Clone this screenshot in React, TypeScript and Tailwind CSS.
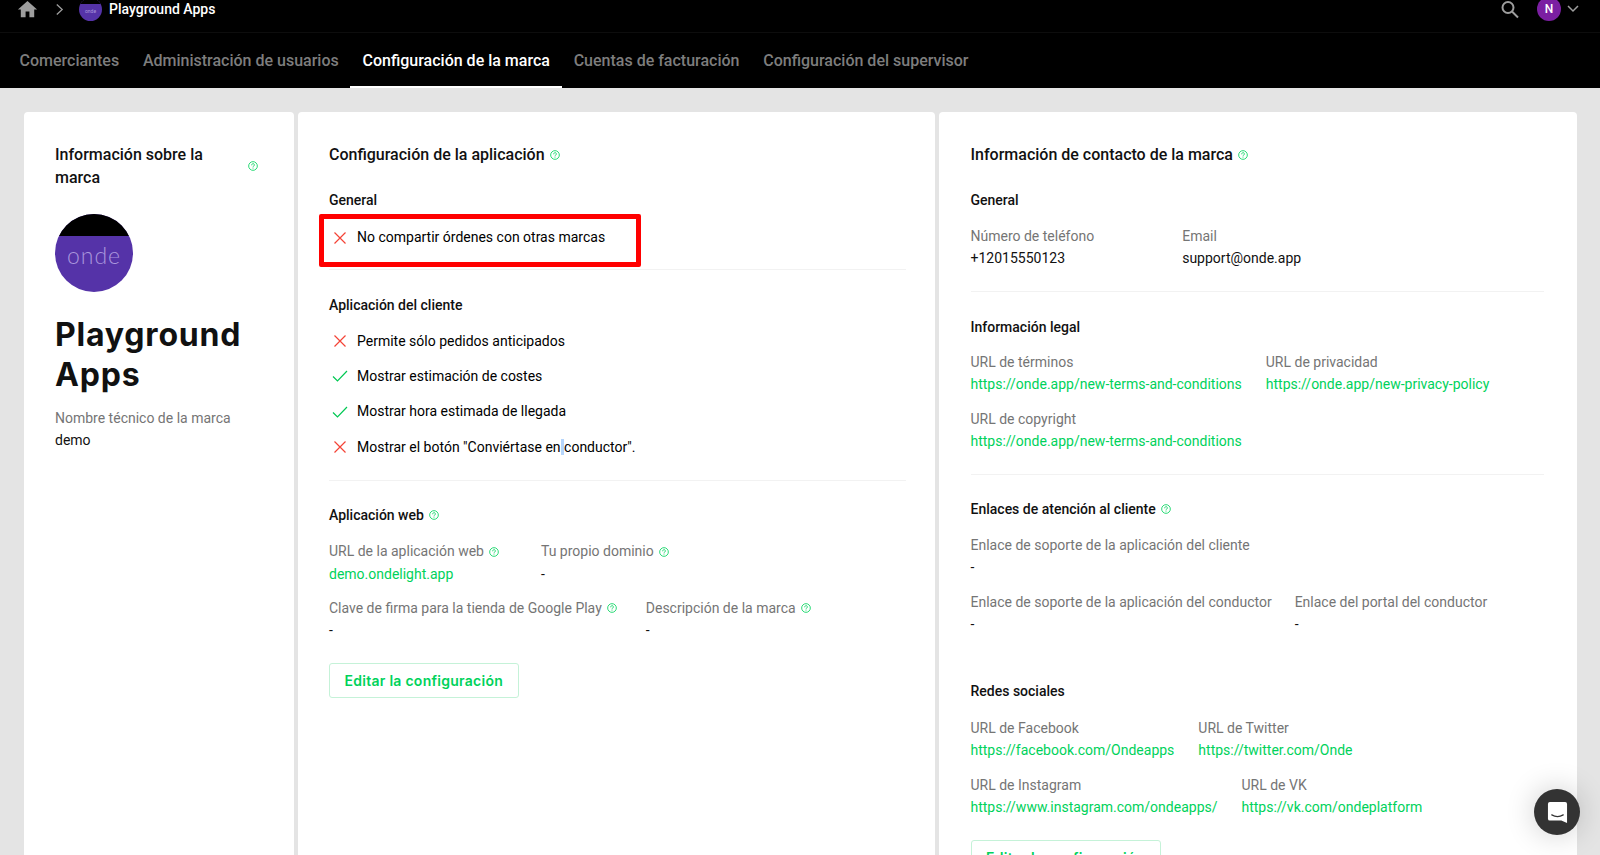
import React from "react";

const Help = ({ className = "" }: { className?: string }) => (
  <svg viewBox="0 0 12 12" className={`w-[10px] h-[10px] shrink-0 ${className}`} fill="none" stroke="#00d25b" strokeWidth="1">
    <circle cx="6" cy="6" r="5.2" />
    <path d="M4.4 4.7a1.6 1.6 0 1 1 2.5 1.3c-.6.4-.9.7-.9 1.3" strokeLinecap="round" />
    <circle cx="6" cy="9" r=".5" fill="#00d25b" stroke="none" />
  </svg>
);

const Cross = () => (
  <svg viewBox="0 0 14 14" className="w-[14px] h-[14px] shrink-0" fill="none" stroke="#f44336" strokeWidth="1.2">
    <path d="M1.5 1.5l11 11M12.5 1.5l-11 11" />
  </svg>
);
const Tick = () => (
  <svg viewBox="0 0 16 12" className="w-[16px] h-[12px] shrink-0 -ml-[1px]" fill="none" stroke="#00c853" strokeWidth="1.2">
    <path d="M1 6.5l4.5 4.5L15 1" />
  </svg>
);

const Row = ({ ok, children }: { ok?: boolean; children: React.ReactNode }) => (
  <div className="flex items-center h-[35.4px] text-[#000]">
    <span className="w-[28px] pl-[3.500px] flex items-center">{ok ? <Tick /> : <Cross />}</span>
    <span>{children}</span>
  </div>
);

const Heading = ({ children, help }: { children: React.ReactNode; help?: boolean }) => (
  <div className="flex items-center gap-[5px] h-[22px] font-medium text-[14px] text-[#111]">
    {children}
    {help && <Help />}
  </div>
);

const Field = ({ label, value, link, help, className = "" }: { label: string; value: string; link?: boolean; help?: boolean; className?: string }) => (
  <div className={`whitespace-nowrap ${className}`}>
    <div className="flex items-center gap-[5px] h-[22px] text-[#757575]">
      {label}
      {help && <Help />}
    </div>
    <div className={`h-[22px] leading-[22px] -mb-[0.500px] ${link ? "text-[#00d25b]" : "text-[#111]"}`}>{value}</div>
  </div>
);

const Divider = () => <div className="h-px bg-[#f2f2f2]" />;

const EditButton = () => (
  <button className="h-[35px] pl-[14.500px] pr-[15px] rounded-[3px] border border-[#c5f2d8] text-[#00d25b] text-[14px] font-semibold tracking-[0.27px] whitespace-nowrap bg-white" style={{ fontFamily: "Inter, sans-serif" }}>
    Editar la configuración
  </button>
);

const CardTitle = ({ children }: { children: React.ReactNode }) => (
  <div className="flex items-center gap-[5px] h-[23px] text-[16px] font-medium text-[#111] whitespace-nowrap">
    {children}
    <Help />
  </div>
);

export default function App() {
  return (
    <div
      className="w-[1600px] h-[855px] overflow-hidden bg-[#e4e4e4] relative text-[14px]"
      style={{ fontFamily: "Roboto, 'Liberation Sans', sans-serif" }}
    >
      {/* top bar */}
      <div className="bg-black h-[33px] flex items-start justify-between border-b border-[#0d0d0d] pl-[16px] pr-[21px]">
        <div className="flex items-center h-[19px] text-white font-medium text-[14px]">
          <svg viewBox="0 0 24 24" className="w-[23px] h-[23px] shrink-0" fill="#9e9e9e">
            <path d="M10 20v-6h4v6h5v-8h3L12 3 2 12h3v8z" />
          </svg>
          <svg viewBox="0 0 10 14" className="w-[9px] h-[13px] ml-[16px] shrink-0" fill="none" stroke="#9e9e9e" strokeWidth="1.4">
            <path d="M2 1.5L8 7l-6 5.500" />
          </svg>
          <span className="w-[23px] h-[23px] shrink-0 rounded-full bg-[#5533a8] ml-[15px] relative overflow-hidden flex items-center justify-center pt-[4px] text-[5px] text-[#a996dd] font-normal">
            <span className="absolute top-0 left-0 right-0 h-[6px] bg-black" />
            onde
          </span>
          <span className="ml-[7px]">Playground Apps</span>
        </div>
        <div className="flex items-start">
          <svg viewBox="0 0 20 20" className="w-[20px] h-[20px]" fill="none" stroke="#9e9e9e" strokeWidth="2">
            <circle cx="8" cy="7.500" r="5.500" />
            <path d="M12 11.500l6 6" />
          </svg>
          <span className="w-[24px] h-[24px] -mt-[3px] ml-[17px] rounded-full bg-[#7b1fa2] text-white text-[12px] font-medium flex items-center justify-center">N</span>
          <svg viewBox="0 0 12 8" className="w-[12px] h-[8px] ml-[6px] mt-[5px]" fill="none" stroke="#9e9e9e" strokeWidth="1.500">
            <path d="M1 1l5 5 5-5" />
          </svg>
        </div>
      </div>

      {/* tabs */}
      <div className="bg-black h-[55px] flex pl-[7.500px] text-[16px] font-medium text-[#7d7d7d] whitespace-nowrap">
        {["Comerciantes", "Administración de usuarios", "Configuración de la marca", "Cuentas de facturación", "Configuración del supervisor"].map((t, i) => (
          <div key={t} className={`h-full px-[12px] mr-[-0.250px] flex items-center border-b-2 pt-[2px] ${i === 2 ? "text-white border-white" : "border-transparent"}`}>
            {t}
          </div>
        ))}
      </div>

      {/* cards */}
      <div className="flex gap-[4px] pl-[24px] pt-[24px]">
        <div className="w-[270px] h-[800px] bg-white rounded-[4px] pl-[31px] pr-[36px] pt-[31px] shrink-0">
          <div className="flex items-center justify-between text-[16px] font-medium text-[#111] leading-[23px]">
            <span className="w-[170px]">Información sobre la marca</span>
            <Help />
          </div>
          <div className="w-[78px] h-[78px] rounded-full mt-[25px] bg-[#5533a8] relative overflow-hidden flex items-center justify-center pt-[4px]">
            <div className="absolute top-0 left-0 right-0 h-[22px] bg-black" />
            <span className="text-[23px] font-light text-[#a996dd] tracking-[1px]" style={{ fontFamily: "Lato, sans-serif" }}>onde</span>
          </div>
          <div className="mt-[23px] text-[32px] leading-[40px] font-bold text-[#111] tracking-[0.8px]" style={{ fontFamily: "Inter, sans-serif" }}>
            Playground Apps
          </div>
          <div className="mt-[12px]">
            <Field label="Nombre técnico de la marca" value="demo" />
          </div>
        </div>

        <div className="w-[637px] h-[800px] bg-white rounded-[4px] pl-[31px] pr-[29px] pt-[31px] shrink-0 relative">
          <CardTitle>Configuración de la aplicación</CardTitle>
          <div className="mt-[23px]"><Heading>General</Heading></div>
          <div className="mt-[9px]">
            <Row>No compartir órdenes con otras marcas</Row>
          </div>
          <div className="mt-[14px]"><Divider /></div>
          <div className="mt-[24px]"><Heading>Aplicación del cliente</Heading></div>
          <div className="mt-[7px]">
            <Row>Permite sólo pedidos anticipados</Row>
            <Row ok>Mostrar estimación de costes</Row>
            <Row ok>Mostrar hora estimada de llegada</Row>
            <Row>
              Mostrar el botón "Conviértase en<span className="bg-[#b5d5fb]"> </span>conductor".
            </Row>
          </div>
          <div className="mt-[15px]"><Divider /></div>
          <div className="mt-[23.500px]"><Heading help>Aplicación web</Heading></div>
          <div className="mt-[14.500px] flex gap-[42px]">
            <Field label="URL de la aplicación web" value="demo.ondelight.app" link help />
            <Field label="Tu propio dominio" value="-" help />
          </div>
          <div className="mt-[13px] flex gap-[29px]">
            <Field label="Clave de firma para la tienda de Google Play" value="-" help />
            <Field label="Descripción de la marca" value="-" help />
          </div>
          <div className="mt-[22px]"><EditButton /></div>
          <div className="absolute left-[21px] top-[102px] w-[322px] h-[53px] border-[5px] border-[#ff0000] rounded-[2px]" />
        </div>

        <div className="w-[638px] h-[800px] bg-white rounded-[4px] pl-[31.500px] pr-[33px] pt-[31px] shrink-0">
          <CardTitle>Información de contacto de la marca</CardTitle>
          <div className="mt-[23px]"><Heading>General</Heading></div>
          <div className="mt-[14px] flex gap-[88px]">
            <Field label="Número de teléfono" value="+12015550123" />
            <Field label="Email" value="support@onde.app" />
          </div>
          <div className="mt-[22.500px]"><Divider /></div>
          <div className="mt-[24px]"><Heading>Información legal</Heading></div>
          <div className="mt-[13px] flex gap-[24px]">
            <Field label="URL de términos" value="https://onde.app/new-terms-and-conditions" link />
            <Field label="URL de privacidad" value="https://onde.app/new-privacy-policy" link />
          </div>
          <div className="mt-[13.500px]">
            <Field label="URL de copyright" value="https://onde.app/new-terms-and-conditions" link />
          </div>
          <div className="mt-[22.500px]"><Divider /></div>
          <div className="mt-[23px]"><Heading help>Enlaces de atención al cliente</Heading></div>
          <div className="mt-[14px]">
            <Field label="Enlace de soporte de la aplicación del cliente" value="-" />
          </div>
          <div className="mt-[13.500px] flex gap-[23px]">
            <Field label="Enlace de soporte de la aplicación del conductor" value="-" />
            <Field label="Enlace del portal del conductor" value="-" />
          </div>
          <div className="mt-[45.500px]"><Heading>Redes sociales</Heading></div>
          <div className="mt-[15px] flex gap-[24px]">
            <Field label="URL de Facebook" value="https://facebook.com/Ondeapps" link />
            <Field label="URL de Twitter" value="https://twitter.com/Onde" link />
          </div>
          <div className="mt-[13.500px] flex gap-[24px]">
            <Field label="URL de Instagram" value="https://www.instagram.com/ondeapps/" link />
            <Field label="URL de VK" value="https://vk.com/ondeplatform" link />
          </div>
          <div className="mt-[22px]"><EditButton /></div>
        </div>
      </div>

      {/* chat bubble */}
      <div className="absolute left-[1534px] top-[789px] w-[46px] h-[46px] rounded-full bg-[#333] flex items-center justify-center shadow-[0_0_30px_rgba(0,0,0,0.2)]">
        <svg viewBox="0 0 22 24" className="w-[21px] h-[23px]">
          <path d="M3 1h16a2 2 0 0 1 2 2v20l-6-2.500H3a2 2 0 0 1-2-2V3a2 2 0 0 1 2-2z" fill="#fff" />
          <path d="M5 14.500c3.500 2 8.500 2 12 0" fill="none" stroke="#333" strokeWidth="1.300" strokeLinecap="round" />
        </svg>
      </div>
    </div>
  );
}
